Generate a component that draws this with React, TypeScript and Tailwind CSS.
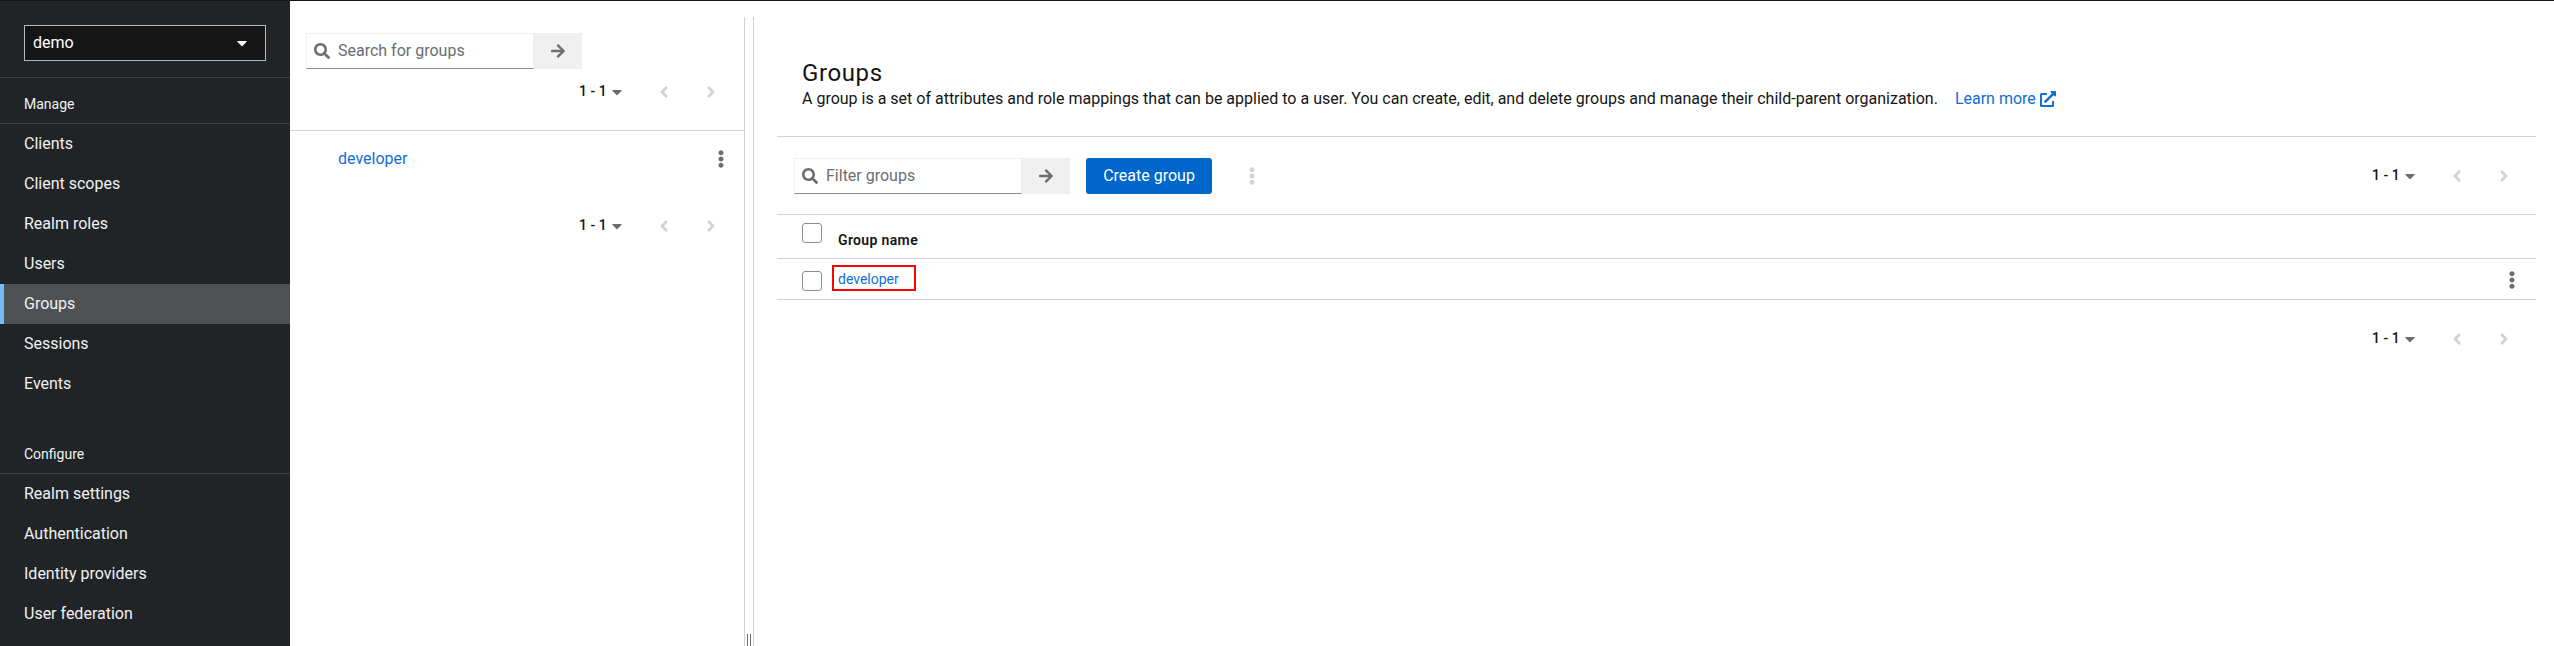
import { FaAngleLeft, FaAngleRight, FaArrowRight, FaCaretDown, FaEllipsisV, FaExternalLinkAlt, FaSearch } from "react-icons/fa";

const manageItems = ["Clients", "Client scopes", "Realm roles", "Users", "Groups", "Sessions", "Events"];
const configureItems = ["Realm settings", "Authentication", "Identity providers", "User federation"];

const NavItem = ({ label }: { label: string }) => {
  if (label === "Groups") {
    return (
      <div className="flex h-10 items-center border-l-4 border-[#73bcf7] bg-[#4f5255] pl-5 text-[16px] text-[#f0f0f0]">
        {label}
      </div>
    );
  }
  return <div className="flex h-10 items-center pl-6 text-[16px] text-[#f0f0f0]">{label}</div>;
};

const Sidebar = () => (
  <aside className="flex w-[290px] shrink-0 flex-col bg-[#212427]">
    <div className="border-b border-[#3c3f42] px-6 pt-6 pb-4">
      <div className="flex h-9 w-[242px] items-center justify-between border border-[#b8bbbe] bg-[#151515] pr-[16px] pl-2 text-[16px] text-white">
        demo
        <FaCaretDown className="h-[16px] w-[14px]" />
      </div>
    </div>
    <div className="h-[46px] border-b border-[#3c3f42] px-6 pt-[16px] text-[14px] leading-[20px] text-[#f0f0f0]">Manage</div>
    {manageItems.map((item) => (
      <NavItem key={item} label={item} />
    ))}
    <div className="mt-[24px] h-[46px] border-b border-[#3c3f42] px-6 pt-[16px] text-[14px] leading-[20px] text-[#f0f0f0]">
      Configure
    </div>
    {configureItems.map((item) => (
      <NavItem key={item} label={item} />
    ))}
  </aside>
);

const SearchBox = ({ placeholder, inputWidth, buttonWidth }: { placeholder: string; inputWidth: string; buttonWidth: string }) => (
  <div className="flex h-[36px]">
    <div className={`flex items-center gap-2 border border-[#f0f0f0] border-b-[#8a8d90] pl-[7px] text-[16px] text-[#6a6e73] ${inputWidth}`}>
      <FaSearch className="h-[16px] w-[16px] shrink-0 text-[#6a6e73]" />
      {placeholder}
    </div>
    <div className={`flex items-center justify-center bg-[#f0f0f0] text-[#6a6e73] ${buttonWidth}`}>
      <FaArrowRight className="h-[16px] w-[16px]" />
    </div>
  </div>
);

const Pagination = () => (
  <div className="flex items-center text-[14px] font-medium text-[#151515]">
    <span className="w-[24px] whitespace-nowrap">1 - 1</span>
    <FaCaretDown className="ml-[9px] h-[16px] w-[10px] text-[#6a6e73]" />
    <FaAngleLeft className="ml-[37px] h-[18px] w-[10px] text-[#d2d2d2]" />
    <FaAngleRight className="ml-[37px] h-[18px] w-[10px] text-[#d2d2d2]" />
  </div>
);

const Checkbox = () => <div className="h-5 w-5 rounded-[3px] border border-[#8a8d90] bg-white" />;

const GroupTree = () => (
  <section className="flex w-[454px] shrink-0 flex-col pt-[32px]">
    <div className="pl-4">
      <SearchBox placeholder="Search for groups" inputWidth="w-[228px]" buttonWidth="w-[48px]" />
    </div>
    <div className="flex justify-end pt-[12px] pr-[28px] pb-[28px]">
      <Pagination />
    </div>
    <div className="flex h-[56px] items-center justify-between border-t border-[#d2d2d2] pr-[17px] pl-[48px] text-[16px] text-[#0f6fd6]">
      developer
      <FaEllipsisV className="h-[18px] w-[12px] text-[#6a6e73]" />
    </div>
    <div className="flex justify-end pt-[29px] pr-[28px]">
      <Pagination />
    </div>
  </section>
);

const Splitter = () => (
  <div className="mt-[16px] flex w-[10px] shrink-0 items-end justify-center gap-[2px] border-x border-[#d2d2d2]">
    <span className="h-[12px] w-px bg-[#6a6e73]" />
    <span className="h-[12px] w-px bg-[#6a6e73]" />
  </div>
);

const MainPanel = () => (
  <main className="min-w-0 flex-1 pr-[18px] pl-[23px]">
    <div className="h-[136px] border-b border-[#d2d2d2] pt-[56px] pl-[25px]">
      <h1 className="text-[24px] leading-[32px] tracking-wide text-[#151515]">Groups</h1>
      <p className="flex text-[16px] leading-[20px] whitespace-nowrap text-[#151515]">
        A group is a set of attributes and role mappings that can be applied to a user. You can create, edit, and delete
        groups and manage their child-parent organization.
        <span className="ml-[17px] flex items-center gap-[4px] text-[#0f6fd6]">
          Learn more
          <FaExternalLinkAlt className="h-[16px] w-[16px]" />
        </span>
      </p>
    </div>
    <div className="flex h-[77px] items-center pr-[18px] pl-[17px]">
      <SearchBox placeholder="Filter groups" inputWidth="w-[228px]" buttonWidth="w-[48px]" />
      <div className="ml-[16px] flex h-9 w-[126px] items-center justify-center rounded-[3px] bg-[#0066cc] text-[16px] text-white">
        Create group
      </div>
      <FaEllipsisV className="ml-[34px] h-[18px] w-[12px] text-[#d2d2d2]" />
      <div className="ml-auto mr-[9px]">
        <Pagination />
      </div>
    </div>
    <div className="flex h-[45px] border-y border-[#d2d2d2] pl-[25px]">
      <div className="pt-[8px]">
        <Checkbox />
      </div>
      <div className="pt-[15px] pl-[16px] text-[14px] font-semibold tracking-wide text-[#151515]">Group name</div>
    </div>
    <div className="flex h-[41px] items-start border-b border-[#d2d2d2] pt-[6px] pr-[18px] pl-[25px]">
      <div className="pt-[6px]">
        <Checkbox />
      </div>
      <div className="ml-[10px] flex h-[26px] w-[84px] items-center border-2 border-[#ff0000] pt-[2px] pl-[4px] text-[14px] text-[#0f6fd6]">
        developer
      </div>
      <FaEllipsisV className="mt-[6px] ml-auto h-[18px] w-[12px] text-[#6a6e73]" />
    </div>
    <div className="flex justify-end pt-[28px] pr-[27px]">
      <Pagination />
    </div>
  </main>
);

export default function App() {
  return (
    <div className="flex h-[646px] w-[2554px] overflow-hidden border-t border-[#151515] bg-white font-['Roboto','Liberation_Sans',sans-serif]">
      <Sidebar />
      <GroupTree />
      <Splitter />
      <MainPanel />
    </div>
  );
}
